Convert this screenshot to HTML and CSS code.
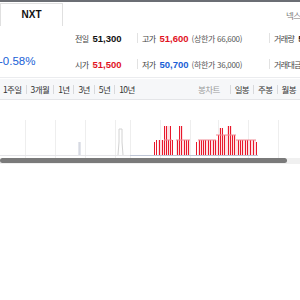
FILE: index.html
```html
<!DOCTYPE html>
<html lang="ko">
<head>
    <meta charset="UTF-8">
    <title>NXT 시세</title>
    <link rel="stylesheet" href="styles.css">
</head>
<body>
    <div class="topbar"></div>
    <div class="head">
        <div class="tab">NXT</div>
        <div class="market">넥스트</div>
    </div>
    <div class="info">
        <div class="rate">-0.58%</div>
        <div class="grid">
            <div class="cell"><span class="lbl">전일</span><b>51,300</b></div>
            <div class="cell sep"><span class="lbl">고가</span><b class="up">51,600</b><span class="sub">(상한가 66,600)</span></div>
            <div class="cell sep"><span class="lbl">거래량</span><b>5</b></div>
            <div class="cell"><span class="lbl">시가</span><b class="up">51,500</b></div>
            <div class="cell sep"><span class="lbl">저가</span><b class="down">50,700</b><span class="sub">(하한가 36,000)</span></div>
            <div class="cell sep"><span class="lbl">거래대금</span></div>
        </div>
    </div>
    <div class="periods">
        <ul class="range">
            <li>1주일</li><li>3개월</li><li>1년</li><li>3년</li><li>5년</li><li>10년</li>
        </ul>
        <ul class="kind">
            <li class="muted">봉차트</li><li>일봉</li><li>주봉</li><li>월봉</li>
        </ul>
    </div>
    <div class="chart">
        <svg width="300" height="58" viewBox="0 0 300 58">
            <g stroke="#eeeeee" stroke-width="1">
                <line x1="25.5" y1="20" x2="25.5" y2="58"/>
                <line x1="55.5" y1="20" x2="55.5" y2="58"/>
                <line x1="85.5" y1="20" x2="85.5" y2="58"/>
                <line x1="115.5" y1="20" x2="115.5" y2="58"/>
                <line x1="130.5" y1="20" x2="130.5" y2="58"/>
                <line x1="160.5" y1="20" x2="160.5" y2="58"/>
                <line x1="190.5" y1="20" x2="190.5" y2="58"/>
                <line x1="218.5" y1="20" x2="218.5" y2="58"/>
                <line x1="248.5" y1="20" x2="248.5" y2="58"/>
                <line x1="278.5" y1="20" x2="278.5" y2="58"/>
            </g>
            <line x1="0" y1="55.5" x2="130" y2="55.5" stroke="#e4e4e8"/>
            <line x1="130" y1="55.5" x2="258" y2="55.5" stroke="#bfc6d6"/>
            <path d="M79 55V42 M80 55V42" stroke="#c8ccd8"/>
            <path d="M118 55L119 42V29H122V42L123 55" fill="none" stroke="#d2d2d2"/>
            <g fill="#fde1e4">
                <rect x="158" y="40" width="14" height="15"/>
                <rect x="165" y="26" width="5" height="14"/>
                <rect x="176" y="40" width="14" height="15"/>
                <rect x="180" y="26" width="3" height="14"/>
                <rect x="198" y="40" width="20" height="15"/>
                <rect x="218" y="35" width="18" height="20"/>
                <rect x="219" y="28" width="4" height="7"/>
                <rect x="227" y="26" width="5" height="9"/>
                <rect x="236" y="40" width="20" height="15"/>
            </g>
            <g stroke="#e8192c" stroke-width="1" fill="none">
                <path d="M154.5 55V42 M156.5 55V40 M159.5 55V40 M162.5 55V40"/>
                <path d="M164.5 55V26 M166.5 55V26 M168.5 55V40 M170.5 55V26 M172.5 55V40"/>
                <path d="M177.5 55V40 M179.5 55V26 M181.5 55V26 M184.5 55V40 M186.5 55V40 M188.5 55V40"/>
                <path d="M196.5 55V42 M199.5 55V40 M201.5 55V40 M203.5 55V40 M205.5 55V40 M208.5 55V40 M210.5 55V40 M213.5 55V40 M215.5 55V40"/>
                <path d="M218.5 55V35 M220.5 55V28 M222.5 55V28 M224.5 55V35 M228.5 55V26 M230.5 55V26 M232.5 55V35 M234.5 55V35"/>
                <path d="M238.5 55V40 M240.5 55V40 M242.5 55V40 M245.5 55V40 M247.5 55V40 M250.5 55V40 M253.5 55V40 M256.5 55V42"/>
            </g>
            <path d="M164 40H172 M176 40H190 M198 40H216 M216 35H236 M236 40H256" stroke="#f08a94"/>
        </svg>
        <div class="scroll"><div class="thumb"></div></div>
    </div>
</body>
</html>
```

FILE: styles.css
```css
body {
    margin: 0;
    font-family: "Noto Sans CJK KR", "Noto Sans", sans-serif;
    font-size: 11px;
    color: #222;
    background-color: #fff;
    overflow: hidden;
}
.topbar {
    height: 2px;
    background-color: #6b6e74;
}
.head {
    display: flex;
    justify-content: space-between;
    align-items: flex-start;
    height: 24px;
    margin-top: 1px;
}
.tab {
    width: 61px;
    height: 22px;
    line-height: 22px;
    border: 1px solid #e0e0e0;
    border-bottom: none;
    text-align: center;
    font-weight: bold;
    font-size: 10px;
    color: #111;
    font-family: "Liberation Sans", Arial, sans-serif;
}
.market {
    margin-top: 6px;
    margin-right: -8px;
    font-size: 8.5px;
    letter-spacing: -0.5px;
    color: #777;
}
.info {
    display: flex;
    height: 50px;
    border-bottom: 1px solid #ebecef;
}
.rate {
    flex: none;
    width: 75px;
    padding-top: 28px;
    font-family: "Liberation Sans", Arial, sans-serif;
    font-size: 11.5px;
    color: #1a5fd6;
    margin-left: -1px;
    margin-right: 1px;
}
.grid {
    flex: none;
    display: grid;
    grid-template-columns: 62px 132px 60px;
    grid-auto-rows: 26px;
    padding-top: 2px;
}
.cell {
    display: flex;
    align-items: center;
    white-space: nowrap;
    height: 18px;
}
.cell.sep {
    border-left: 1px solid #e2e2e2;
    padding-left: 4px;
    height: 10px;
    margin-top: 4px;
}
.lbl {
    color: #444;
    font-size: 8px;
    letter-spacing: -0.6px;
    margin-right: 4px;
}
.cell b {
    font-family: "Liberation Sans", Arial, sans-serif;
    font-size: 9.5px;
    color: #111;
}
.cell b.up {
    color: #e1131f;
}
.cell b.down {
    color: #1a5fd6;
}
.sub {
    margin-left: 3px;
    font-size: 8px;
    letter-spacing: -0.3px;
    color: #555;
}
.periods {
    display: flex;
    justify-content: space-between;
    align-items: center;
    height: 20px;
    margin-top: 1px;
    background-color: #f6f7f9;
    border-bottom: 1px solid #e4e5e8;
}
.periods ul {
    display: flex;
    list-style: none;
    margin: 0;
    padding: 0;
}
.periods li {
    font-size: 8.5px;
    letter-spacing: -0.6px;
    color: #333;
    padding: 0 4px;
    border-left: 1px solid #d8d9dc;
    line-height: 9px;
}
.periods li:first-child {
    border-left: none;
}
.range li:first-child {
    padding-left: 3px;
}
.kind {
    margin-right: -6px;
}
.kind li.muted {
    color: #999;
    border-left: none;
    padding-right: 10px;
}
.chart svg {
    display: block;
}
.scroll {
    height: 6px;
    background-color: #f0f0f0;
}
.thumb {
    width: 287px;
    height: 5px;
    border-radius: 3px;
    background-color: #7a7a7a;
}
```
